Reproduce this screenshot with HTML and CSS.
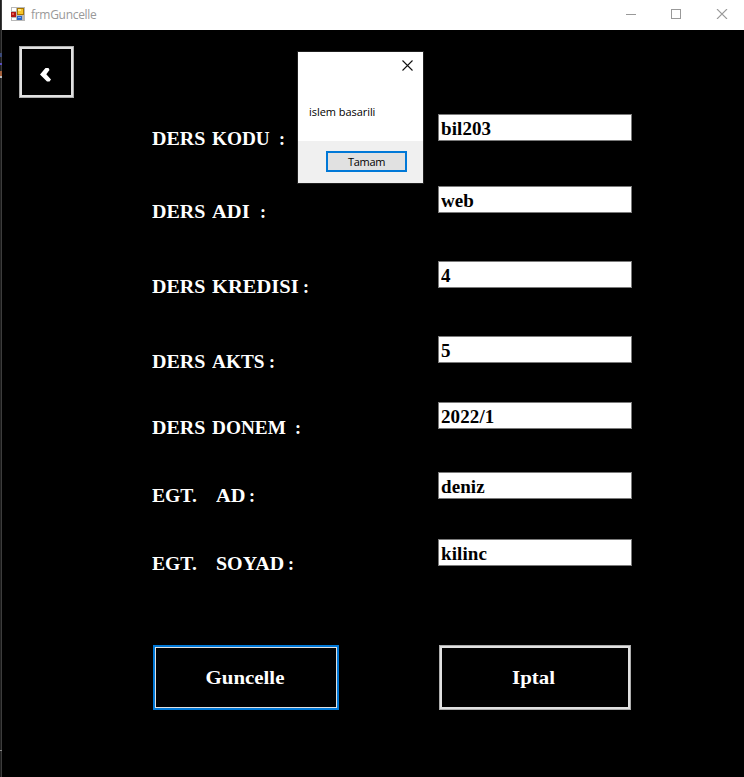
FILE: index.html
```html
<!DOCTYPE html>
<html lang="tr">
<head>
<meta charset="utf-8">
<title>frmGuncelle</title>
<link rel="stylesheet" href="styles.css">
</head>
<body>
<div class="window">
  <header class="titlebar">
    <svg class="app-icon" width="14" height="14" viewBox="0 0 14 14" shape-rendering="crispEdges">
      <path fill="#b8b8b8" d="M0 0h14v14H0z"/>
      <path fill="#fff" d="M1 1h4v3H1zM1 11h4v2H1z"/>
      <path fill="#b01818" d="M0 5h5v5H0z"/><path fill="#e65b50" d="M1 6h2v2H1z"/>
      <path fill="#a87500" d="M6 1h7v7H6z"/><path fill="#f6c52c" d="M7 2h5v5H7z"/><path fill="#ffe889" d="M7 2h3v2H7z"/>
      <path fill="#2864c8" d="M6 9h5v4H6z"/><path fill="#79adf5" d="M7 10h3v1H7z"/>
    </svg>
    <span class="title">frmGuncelle</span>
    <svg class="controls" width="102" height="10" viewBox="0 0 102 10" fill="none" stroke="#999">
      <path d="M0 5.5h10M45.500 .5h9v9h-9z" shape-rendering="crispEdges"/>
      <path d="M91 0l10 10M101 0L91 10" stroke-width="1.1"/>
    </svg>
  </header>
  <main class="client">
    <button class="btn back" aria-label="Geri"><svg width="12" height="14" viewBox="0 0 12 14"><path fill="#fff" d="M0 6.500L5.500 0H8.500L9.500 2 6.300 6.200 11 11.500 9.500 13.500H7z"/></svg></button>
    <form class="fields">
      <label class="r1"><span class="w1">DERS</span><span class="kodu">KODU</span><span class="colon">:</span></label><input value="bil203">
      <label class="r2"><span class="w1">DERS</span><span class="adi">ADI</span><span class="colon">:</span></label><input value="web">
      <label class="r3"><span class="w1">DERS</span><span class="kredisi">KREDISI</span><span class="colon">:</span></label><input value="4">
      <label class="r4"><span class="w1">DERS</span><span class="akts">AKTS</span><span class="colon">:</span></label><input value="5">
      <label class="r5"><span class="w1">DERS</span><span class="donem">DONEM</span><span class="colon">:</span></label><input value="2022/1">
      <label class="r6"><span class="w2">EGT.</span><span class="ad">AD</span><span class="colon">:</span></label><input value="deniz">
      <label class="r7"><span class="w2">EGT.</span><span class="soyad">SOYAD</span><span class="colon">:</span></label><input value="kilinc">
    </form>
    <div class="actions">
      <button class="btn update"><span>Guncelle</span></button>
      <button class="btn cancel"><span>Iptal</span></button>
    </div>
  </main>
</div>
<div class="dialog" role="alertdialog">
  <svg class="close" width="11" height="11" viewBox="0 0 11 11" stroke="#111" stroke-width="1.1"><path d="M.5 .5l10 10M10.500 .5l-10 10"/></svg>
  <p class="message">islem basarili</p>
  <div class="dialog-footer"><button class="ok">Tamam</button></div>
</div>
</body>
</html>
```
FILE: styles.css
```css
* { box-sizing: border-box; }
html, body { height: 100%; }
body {
  margin: 0;
  overflow: hidden;
  background: #000;
  font-family: "Open Sans", "Noto Sans", sans-serif;
}
button { margin: 0; padding: 0; }
.window {
  height: 777px;
  padding-left: 2px;
  background:
    linear-gradient(#3c4a78, #3c4a78) 0 53px / 2px 4px no-repeat,
    linear-gradient(#5a4fc0, #5a4fc0) 0 63px / 2px 2px no-repeat,
    linear-gradient(#a3603c, #a3603c) 0 71px / 2px 5px no-repeat,
    linear-gradient(#bbb, #bbb) 0 76px / 2px 2px no-repeat,
    linear-gradient(#888, #888) 0 750px / 2px 1px no-repeat,
    linear-gradient(90deg, #1e1e1e 1px, #3c3c3c 1px) 0 0 / 2px 100% no-repeat,
    #000;
}
.titlebar {
  display: flex;
  align-items: center;
  height: 30px;
  padding: 0 16px 2px 9px;
  background: #fff;
}
.title {
  margin: 2px 0 0 6px;
  font-size: 12px;
  line-height: 16px;
  letter-spacing: -0.3px;
  color: #999;
}
.controls { margin-left: auto; }
.client {
  padding: 16px 0 0 17px;
  font-family: "Liberation Serif", serif;
  font-weight: bold;
}
.btn {
  display: flex;
  align-items: center;
  justify-content: center;
  background: #000;
  color: #fff;
  border: 1px solid #adadad;
  box-shadow: inset 0 0 0 2px #e1e1e1;
  font: bold 18px/20px "Liberation Serif", serif;
}
.back { width: 55px; height: 52px; padding: 5px 1px 0 0; }
.fields {
  display: grid;
  grid-template-columns: 286px 194px;
  grid-template-rows: 72px 75px 75px 66px 70px 67px 27px;
  align-items: start;
  margin: 16px 0 0 133px;
}
.fields label {
  display: flex;
  padding-top: 16px;
  color: #fff;
  font-size: 18px;
  line-height: 20px;
  white-space: nowrap;
}
.fields .r1, .fields .r7 { padding-top: 15px; }
.fields .r6 { padding-top: 14px; }
.fields input {
  width: 194px;
  height: 27px;
  margin: 0;
  padding: 2px 2px 0;
  border: 1px solid #7a7a7a;
  border-radius: 0;
  background: #fff;
  color: #000;
  font: bold 19px/22px "Liberation Serif", serif;
  letter-spacing: 0.1px;
}
label span { transform-origin: left; }
.w1 { width: 60px; transform: scaleX(1.11); }
.w2 { width: 64px; transform: scaleX(1.09); }
.kodu { width: 67px; transform: scaleX(1.07); }
.adi { width: 48px; transform: scaleX(1.14); }
.kredisi { width: 91px; transform: scaleX(1.14); }
.akts { width: 57px; transform: scaleX(1.07); }
.donem { width: 83px; transform: scaleX(1.07); }
.ad { width: 33px; transform: scaleX(1.13); }
.soyad { width: 72px; transform: scaleX(1.11); }
.colon { width: 6px; }
.actions {
  display: grid;
  grid-template-columns: 186px 192px;
  column-gap: 100px;
  margin: 79px 0 0 134px;
}
.actions .btn { height: 65px; padding-top: 1px; }
.actions span { transform: scaleX(1.16); }
.actions .update {
  padding-right: 2px;
  border: 2px solid #0078d7;
  box-shadow: inset 0 0 0 1px #e1e1e1;
}
.actions .cancel { padding-right: 3px; }
.dialog {
  position: absolute;
  left: 297px;
  top: 51px;
  width: 127px;
  height: 133px;
  display: flex;
  flex-direction: column;
  border: 1px solid #202020;
  background: #fff;
  color: #000;
  font-size: 11px;
}
.close { margin: 8px 10px 0 auto; flex: none; }
.message {
  margin: 33px 0 0 11px;
  line-height: 16px;
  letter-spacing: -0.05px;
  white-space: nowrap;
}
.dialog-footer {
  display: flex;
  justify-content: flex-end;
  height: 42px;
  margin-top: auto;
  padding: 10px 16px 0 0;
  background: #f0f0f0;
}
.ok {
  width: 81px;
  height: 21px;
  border: 2px solid #0078d7;
  background: #e1e1e1;
  color: #000;
  font: 11px/16px "Open Sans", "Noto Sans", sans-serif;
  letter-spacing: -0.3px;
}
```
